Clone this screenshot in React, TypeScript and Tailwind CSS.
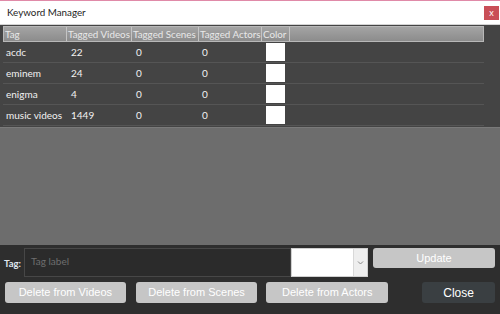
import React from "react";

const rows = [
  { tag: "acdc", videos: "22", scenes: "0", actors: "0" },
  { tag: "eminem", videos: "24", scenes: "0", actors: "0" },
  { tag: "enigma", videos: "4", scenes: "0", actors: "0" },
  { tag: "music videos", videos: "1449", scenes: "0", actors: "0" },
];

const ui = { fontFamily: 'Lato, "Noto Sans", sans-serif' };
const btn = { fontFamily: '"Liberation Sans", Arial, sans-serif' };

export default function App() {
  return (
    <div className="w-[500px] h-[314px] flex flex-col bg-[#2e2e2e] overflow-hidden" style={ui}>
      {/* Title bar */}
      <div className="h-[25px] bg-white border-t border-[#e08aa8] border-b border-b-[#d4d4d4] flex items-center justify-between pl-[7px] pr-[1px]">
        <span className="text-[9.8px] text-[#1e1e1e] leading-none">Keyword Manager</span>
        <div className="w-[15px] h-[14px] bg-[#c94f58] flex items-center justify-center text-white text-[9px] leading-none">
          x
        </div>
      </div>

      {/* Grid */}
      <div className="h-[220px] flex flex-col bg-[#6d6d6d]">
        <div className="bg-[#444444] pl-[3px] pr-[16px] pt-[1px]">
          {/* Header */}
          <div className="flex h-[16px] bg-gradient-to-b from-[#a4a4a4] to-[#8c8c8c] border border-[#b8b8b8] text-[9.8px] text-[#e8e8e8] leading-[14px] whitespace-nowrap overflow-hidden">
            <div className="w-[63px] pl-[1px] border-r border-[#c4c4c4] overflow-hidden">Tag</div>
            <div className="w-[65px] pl-[1px] border-r border-[#c4c4c4] overflow-hidden">Tagged Videos</div>
            <div className="w-[67px] pl-[1px] border-r border-[#c4c4c4] overflow-hidden">Tagged Scenes</div>
            <div className="w-[63px] pl-[1px] border-r border-[#c4c4c4] overflow-hidden">Tagged Actors</div>
            <div className="w-[28px] pl-[1px] border-r border-[#c4c4c4] overflow-hidden">Color</div>
            <div className="flex-1" />
          </div>
          {rows.map((r) => (
            <div key={r.tag} className="flex h-[21px] items-center border-b border-[#555555] text-[10px] text-[#f2f2f2] whitespace-nowrap">
              <div className="w-[64px] pl-[3px]">{r.tag}</div>
              <div className="w-[65px] pl-[4px]">{r.videos}</div>
              <div className="w-[67px] pl-[4px]">{r.scenes}</div>
              <div className="w-[66px] pl-[3px]">{r.actors}</div>
              <div className="w-[26px] h-full flex pl-[1px] py-[1px]">
                <div className="w-[19px] h-full bg-white" />
              </div>
            </div>
          ))}
          <div className="h-[1px]" />
        </div>
        <div className="flex-1 border-t border-[#7a7a7a]" />
      </div>

      {/* Bottom panel */}
      <div className="flex-1 flex flex-col px-[5px] pt-[3px] gap-[5px]">
        <div className="flex items-start h-[29px]">
          <span className="text-[9.5px] font-bold text-[#dfe6ee] w-[20px] mt-[9px] -ml-[1px]">Tag:</span>
          <div className="w-[267px] h-[29px] bg-[#2b2b2b] border border-[#474747] flex items-center pl-[6px] pb-[2px] text-[10px] text-[#6e6e6e]">
            Tag label
          </div>
          <div className="w-[77px] h-[29px] bg-white border border-[#d0d0d0] flex">
            <div className="flex-1" />
            <div className="w-[14px] bg-[#eeeeee] border-l border-[#d8d8d8] flex items-center justify-center">
              <svg width="7" height="4" viewBox="0 0 7 4">
                <path d="M1 0.5 L3.5 3 L6 0.5" stroke="#888" strokeWidth="1" fill="none" />
              </svg>
            </div>
          </div>
          <button className="ml-[5px] w-[122px] h-[20px] bg-[#c6c6c6] rounded-[3px] text-white text-[11px]" style={btn}>
            Update
          </button>
        </div>
        <div className="flex items-center">
          <button className="w-[121px] h-[21px] bg-[#c6c6c6] rounded-[3px] text-white text-[11px]" style={btn}>
            Delete from Videos
          </button>
          <button className="ml-[10px] w-[122px] h-[21px] bg-[#c6c6c6] rounded-[3px] text-white text-[11px]" style={btn}>
            Delete from Scenes
          </button>
          <button className="ml-[9px] w-[122px] h-[21px] bg-[#c6c6c6] rounded-[3px] text-white text-[11px]" style={btn}>
            Delete from Actors
          </button>
          <button className="ml-[34px] w-[73px] h-[21px] bg-[#3a3f42] rounded-[3px] text-white text-[12px]" style={btn}>
            Close
          </button>
        </div>
      </div>
    </div>
  );
}
